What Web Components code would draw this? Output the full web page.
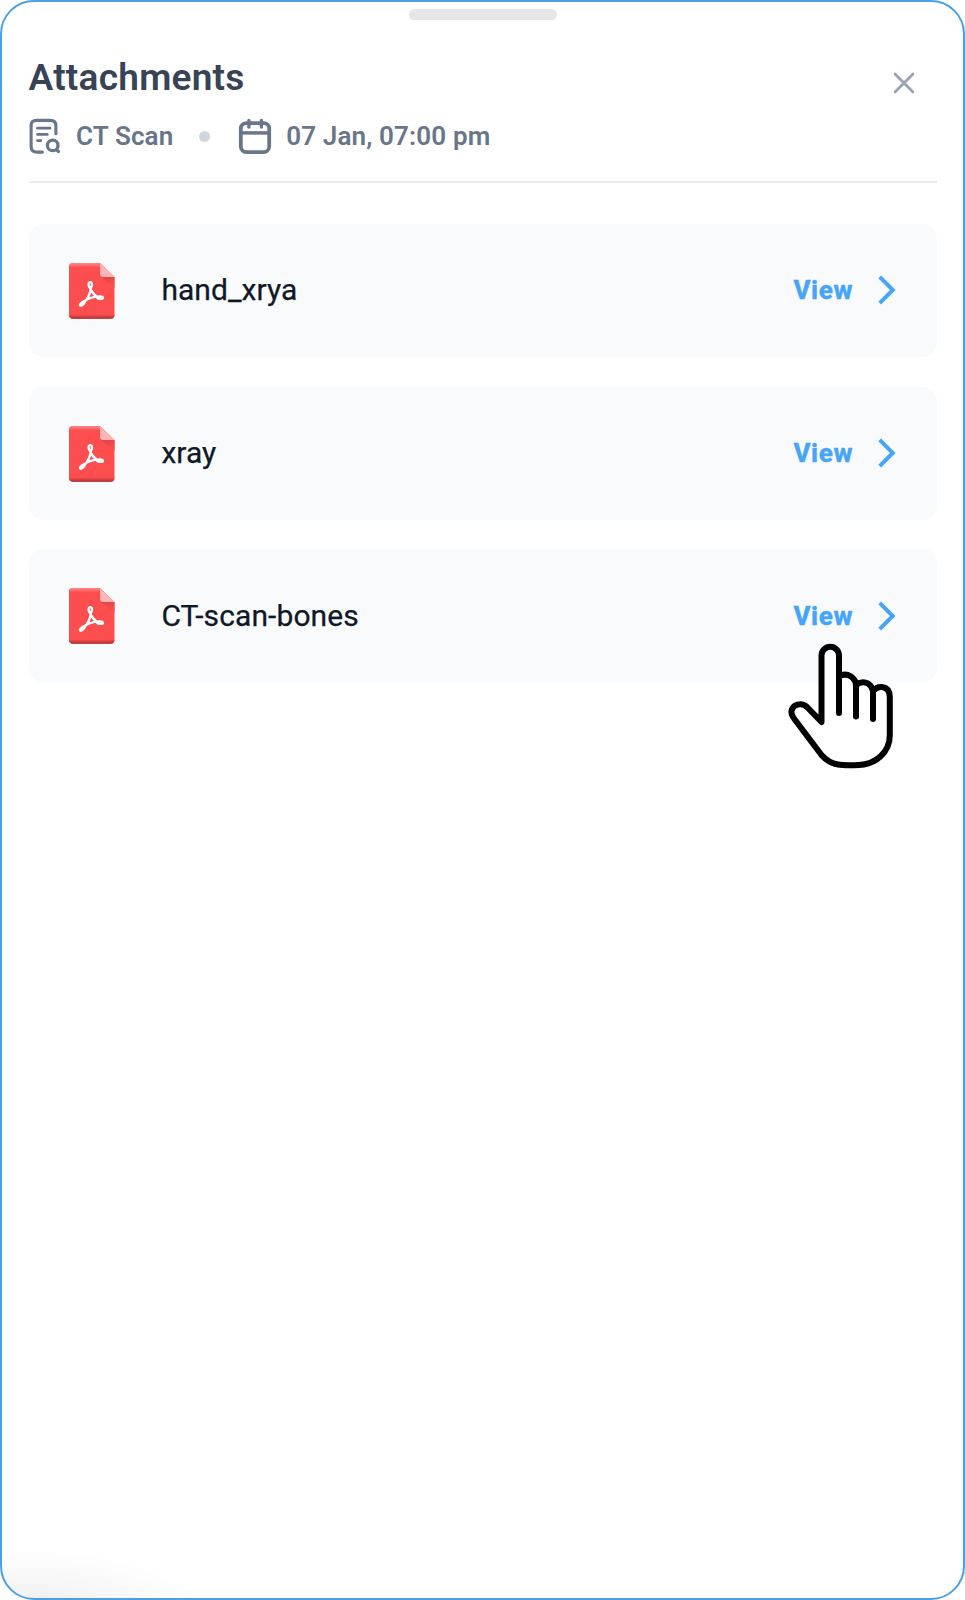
<!DOCTYPE html>
<html lang="en">
<head>
<meta charset="utf-8">
<title>Attachments</title>
<style>
html,body{margin:0;height:100%;background:#fff}
body{font-family:Roboto,"Liberation Sans",sans-serif}
</style>
</head>
<body>
<attachment-sheet>
  <sheet-header>
    <span slot="title">Attachments</span>
    <span slot="kind">CT Scan</span>
    <span slot="date">07 Jan, 07:00 pm</span>
  </sheet-header>
  <file-row>hand_xrya</file-row>
  <file-row>xray</file-row>
  <file-row pointed style="--spacing:.1px">CT-scan-bones</file-row>
</attachment-sheet>
<script>
const define = (name, markup) => {
  const template = document.createElement('template');
  template.innerHTML = markup;
  customElements.define(name, class extends HTMLElement {
    constructor() {
      super();
      this.attachShadow({mode: 'open'}).append(template.content.cloneNode(true));
    }
  });
};

define('scan-icon', `<style>:host{display:block;width:32px;height:36px}svg{display:block}</style>
<svg width="32" height="36" viewBox="0 -.5 32 36" fill="none" stroke="#697689" stroke-width="3.1" stroke-linecap="round" stroke-linejoin="round">
<path d="M13.4 33.6H7.6Q2.1 33.6 2.1 28.1V7.3Q2.1 1.9 7.6 1.9H21.4Q26.900 1.900 26.900 7.300V15.200"/>
<path stroke-width="2.8" d="M8.500 9.700H21M8.500 15.900H18.300M8.500 22.100H11.800"/>
<circle cx="23.700" cy="26.900" r="5.300" stroke-width="3.3"/><path stroke-width="3.2" d="M28 31.600L29.500 33"/></svg>`);

define('calendar-icon', `<style>:host{display:block;width:34px;height:36px}svg{display:block}</style>
<svg width="34" height="36" viewBox="-.5 -.4 34 36" fill="none" stroke="#697689" stroke-width="3.8" stroke-linecap="round">
<rect x="2.300" y="4.700" width="28.400" height="29" rx="5.500"/><path stroke-width="3.4" d="M10.400 2V8.700M22.900 2V8.700"/><path stroke-linecap="butt" stroke-width="3.500" d="M2.300 14.500H30.700"/></svg>`);

define('close-icon', `<style>:host{display:block;width:24px;height:24px}svg{display:block}</style>
<svg width="24" height="24" viewBox="0 0 24 24" fill="none" stroke="#98a2b3" stroke-width="2.8" stroke-linecap="round"><path d="M3 3L21 21M21 3L3 21"/></svg>`);

define('pdf-icon', `<style>:host{display:block;width:46px;height:56px;margin-top:1px}svg{display:block}</style>
<svg width="46" height="56" viewBox="0 0 46 56">
<defs><linearGradient id="top" x2="0" y2="1"><stop stop-color="#ff8789"/><stop offset="1" stop-color="#fe4f50"/></linearGradient>
<linearGradient id="base" x2="0" y2="1"><stop stop-color="#fb4d4e"/><stop offset=".45" stop-color="#d34042"/><stop offset="1" stop-color="#a43032"/></linearGradient>
<linearGradient id="fold" x2=".7" y2="1"><stop stop-color="#d94548"/><stop offset="1" stop-color="#fc4e4f"/></linearGradient>
<clipPath id="sheet"><path d="M4 0H31L45.500 14V52Q45.500 55.700 41.500 55.700H4Q0 55.700 0 52V4Q0 0 4 0Z"/></clipPath></defs>
<g clip-path="url(#sheet)"><path fill="#fc4e4f" d="M0 0H46V56H0Z"/><path fill="url(#top)" d="M0 0H46V4.500H0Z"/><path fill="url(#base)" d="M0 51.500H46V56H0Z"/><path fill="url(#fold)" d="M32 14H46V25Z"/></g>
<path fill="#ffb5b6" d="M31 0L45.500 14H34.500Q31 14 31 10.500Z"/>
<g fill="none" stroke="#fff" stroke-width="2.300" stroke-linecap="round" stroke-linejoin="round">
<ellipse cx="21.300" cy="21.700" rx="1.700" ry="2.500"/><ellipse cx="31" cy="34.600" rx="2.900" ry="1.300" transform="rotate(4 31 34.600)"/><ellipse cx="13.200" cy="40.700" rx="2.700" ry="1.200" transform="rotate(-40 13.200 40.700)"/>
<path d="M21 25C22.600 29 24.500 31.500 28.200 34M22 25C21 31 19 35.500 15.500 39M15 38.500C19 35.500 23 34.200 28.200 33.700"/></g></svg>`);

define('chevron-icon', `<style>:host{display:block;width:20px;height:32px}svg{display:block}</style>
<svg width="20" height="32" viewBox="0 0 20 32" fill="none" stroke="#47a5f8" stroke-width="4"><path d="M1.700 2.900L14.800 16L1.700 29.100"/></svg>`);

define('pointer-hand', `<style>:host{display:block;width:106px;height:126px}svg{display:block}</style>
<svg width="106" height="126" viewBox="788 643 106 126" fill="#fff" stroke="#000" stroke-width="6" stroke-linecap="round" stroke-linejoin="round">
<path d="M821.500 722V655.500A8.750 8.750 0 0 1 839 655.500V676Q845.500 673 851 676.500Q855.500 679.500 856 685Q862 680.500 868 683.500Q872 686 873 691Q877 686.300 882 687Q889.800 688 889.800 697V735C889.800 753 875 764.500 859 765C850 765.300 842 765.200 838 764.500Q828.500 763 821.500 755L794 718.500C788.800 712 792 704.500 800.300 704.200Q804 704.100 807 707L821.500 722Z"/>
<path fill="none" d="M839 676V713M856 684V716.500M873 691V719"/></svg>`);

define('sheet-header', `<style>
:host{display:block;border-bottom:2px solid #eaebf1;padding-bottom:22.700px}
.bar{display:flex;justify-content:space-between;align-items:flex-start}
h1{margin:0;font-size:37px;line-height:43px;font-weight:600;color:#384355;letter-spacing:.26px}
close-icon{margin:15px 21px 0 0}
.meta{display:flex;align-items:center;height:44px;margin-top:15px;font-size:26px;line-height:32px;font-weight:600;color:#697689;white-space:nowrap}
.kind{margin-left:15.500px;width:96px;letter-spacing:.15px}
.dot{width:11px;height:11px;border-radius:50%;background:#d0d5df;margin:0 28.300px 0 26.700px}
.date{margin-left:14.200px;letter-spacing:.15px}
</style>
<div class="bar"><h1><slot name="title"></slot></h1><close-icon></close-icon></div>
<div class="meta"><scan-icon></scan-icon><span class="kind"><slot name="kind"></slot></span><i class="dot"></i><calendar-icon></calendar-icon><span class="date"><slot name="date"></slot></span></div>`);

define('file-row', `<style>
:host{display:flex;align-items:center;height:133px;box-sizing:border-box;padding:0 39.500px 0 40.500px;border-radius:14px;background:#f9fafc;color:#101828;position:relative}
.name{margin-left:46.400px;font-size:30px;line-height:36px;letter-spacing:var(--spacing,.05px);-webkit-text-stroke:.25px currentColor;flex:1}
.view{font-size:26px;line-height:32px;font-weight:800;color:#47a5f8;letter-spacing:.6px;margin-right:24.500px;-webkit-text-stroke:.3px currentColor}
pointer-hand{display:none;position:absolute;left:759.400px;top:93.700px}
:host([pointed]) pointer-hand{display:block}
</style>
<pdf-icon></pdf-icon><span class="name"><slot></slot></span><span class="view">View</span><chevron-icon></chevron-icon><pointer-hand></pointer-hand>`);

define('attachment-sheet', `<style>
:host{display:block;box-sizing:border-box;width:965px;height:1600px;border:2px solid #4c9fe2;border-radius:34px;padding:7px 26px 0 26.500px;background:radial-gradient(ellipse 165px 58px at 30px 1606px,#efefef,#f7f7f7 50%,#fff 100%),#fff}
.handle{width:148px;height:11px;border-radius:6px;background:#e6e6e6;margin:0 auto}
.content{padding-top:36px}
::slotted(sheet-header){margin-bottom:41px}
::slotted(file-row){margin-bottom:29.900px}
</style><div class="handle"></div><div class="content"><slot></slot></div>`);
</script>
</body>
</html>
